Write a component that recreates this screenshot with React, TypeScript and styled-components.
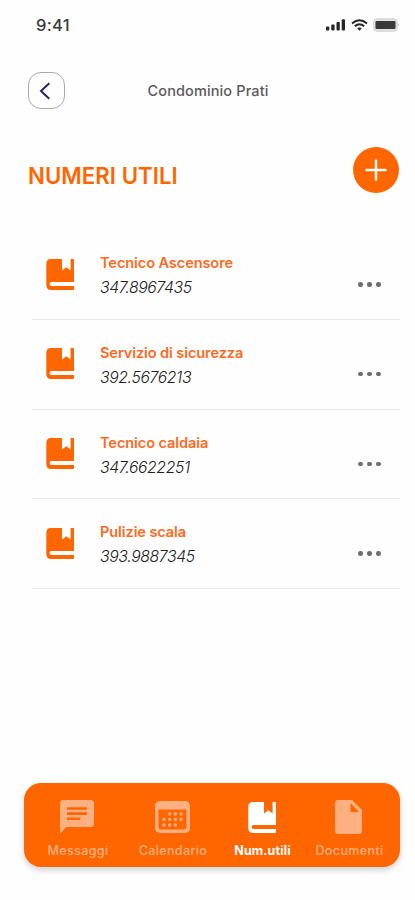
import React from "react";
import styled, { createGlobalStyle } from "styled-components";

const ORANGE = "#ff6600";
const PEACH = "#ffb080";

const GlobalStyle = createGlobalStyle`
  * { box-sizing: border-box; }
  body { margin: 0; background: #fefefe; }
  button { border: 0; padding: 0; background: none; font: inherit; color: inherit; }
  svg { display: block; flex: none; }
`;

const Screen = styled.div`
  display: flex;
  flex-direction: column;
  width: 415px;
  height: 900px;
  overflow: hidden;
  background: #fefefe;
  font-family: Inter, sans-serif;
`;

const StatusBar = styled.header`
  display: flex;
  align-items: center;
  justify-content: space-between;
  height: 50px;
  padding: 0 15px 0 36px;
`;

const Clock = styled.span`
  font-size: 16.5px;
  font-weight: 500;
  letter-spacing: 0.3px;
  color: #3a3a3a;
`;

const StatusIcons = styled.div`
  display: flex;
  align-items: center;
  gap: 5px;
`;

const TopBar = styled.div`
  display: grid;
  grid-template-columns: 37px 1fr 37px;
  align-items: center;
  width: 360px;
  height: 37px;
  margin: 22px 0 0 28px;
`;

const BackButton = styled.button`
  display: grid;
  place-items: center;
  width: 37px;
  height: 37px;
  padding-right: 3px;
  border: 1px solid #aaa;
  border-radius: 13px;
`;

const PlaceName = styled.span`
  text-align: center;
  font-size: 14.5px;
  font-weight: 500;
  letter-spacing: 0.12px;
  color: #5a5a5a;
`;

const Heading = styled.div`
  display: flex;
  align-items: center;
  justify-content: space-between;
  height: 46px;
  margin-top: 38px;
  padding: 0 16px 0 28px;
`;

const Title = styled.h1`
  margin: 11px 0 0;
  font-size: 22.2px;
  line-height: 28px;
  font-weight: 600;
  letter-spacing: 0.05px;
  color: ${ORANGE};
`;

const AddButton = styled.button`
  display: grid;
  place-items: center;
  width: 46px;
  height: 46px;
  border-radius: 50%;
  background: ${ORANGE};
`;

const ContactList = styled.ul`
  list-style: none;
  margin: 37px 15px 0 32px;
  padding: 0;
`;

const ContactRow = styled.li`
  display: grid;
  grid-template-columns: 68px 1fr 42px;
  height: 89.75px;
  padding-top: 20px;
  border-bottom: 1.5px solid #e9e9e9;
`;

const BookCell = styled.div`
  padding: 8.5px 0 0 14px;
  color: ${ORANGE};
`;

const ContactName = styled.div`
  font-size: 14.6px;
  line-height: 26px;
  font-weight: 600;
  letter-spacing: -0.12px;
  color: #ff6a1f;
`;

const Phone = styled.div`
  font-size: 15.8px;
  line-height: 24px;
  font-style: italic;
  font-weight: 300;
  letter-spacing: -0.4px;
  color: #222;
`;

const MoreButton = styled.button`
  display: flex;
  align-self: start;
  gap: 4.4px;
  margin-top: 32px;
`;

const Dot = styled.span`
  width: 4.6px;
  height: 4.6px;
  border-radius: 50%;
  background: #6c6c6c;
`;

const BottomNav = styled.nav`
  display: grid;
  grid-template-columns: 98px 92px 87px 87px;
  width: 376px;
  height: 84px;
  margin: auto 0 33px 24px;
  padding: 0 7px 0 5px;
  border-radius: 17px;
  background: ${ORANGE};
  box-shadow: 0 3px 6px rgba(0, 0, 0, 0.18);
`;

const NavItem = styled.a<{ $active?: boolean }>`
  display: flex;
  flex-direction: column;
  align-items: center;
  padding-top: 16.5px;
  color: ${(p) => (p.$active ? "#fff" : PEACH)};
`;

const NavIcon = styled.span`
  display: grid;
  place-items: center;
  height: 35px;
  margin-right: 1.5px;
`;

const NavLabel = styled.span<{ $active?: boolean }>`
  margin-top: 7px;
  font-size: 12.5px;
  line-height: 18px;
  white-space: nowrap;
  font-weight: ${(p) => (p.$active ? 700 : 500)};
  letter-spacing: ${(p) => (p.$active ? 0.12 : 0.38)}px;
`;

const BookIcon = () => (
  <svg width="28" height="31" viewBox="0 0 28 31" fill="currentColor">
    <path d="M5 0H16V11.6L20.3 8.2 24.6 11.6V0H27.2Q28 0 28 .8V23.1H5.5Q3.6 23.1 3.6 25T5.5 26.9H28V30.2Q28 31 27.2 31H5.2Q.3 31 .3 26V4.7Q.3 0 5 0Z" />
  </svg>
);

const MessageIcon = () => (
  <svg width="34" height="34" viewBox="0 0 34 34">
    <path d="M3.5 0H30.5Q34 0 34 3.5V23.5Q34 27 30.5 27H6.5L0 33.7V3.5Q0 0 3.5 0Z" fill="currentColor" />
    <path d="M7 8.5H27M7 13.6H27M7 18.8H20.5" stroke={ORANGE} strokeWidth="2.6" />
  </svg>
);

const CalendarIcon = () => (
  <svg width="35" height="32" viewBox="0 0 35 32">
    <rect width="35" height="32" rx="5" fill="currentColor" />
    <path d="M3.5 8.5H31.5V26Q31.5 28.5 29 28.5H6Q3.5 28.5 3.5 26Z" fill={ORANGE} />
    <path
      d="M14.7 13h.01M20.4 13h.01M26.1 13h.01M9 18.5h.01M14.7 18.5h.01M20.4 18.5h.01M26.1 18.5h.01M9 24h.01M14.7 24h.01M20.4 24h.01"
      stroke="currentColor"
      strokeWidth="3.4"
      strokeLinecap="round"
    />
  </svg>
);

const DocumentIcon = () => (
  <svg width="27" height="34" viewBox="0 0 27 34">
    <path fillRule="evenodd" d="M3.5 0H17L27 10V30.5Q27 34 23.5 34H3.5Q0 34 0 30.5V3.5Q0 0 3.5 0ZM15.5 3V12H24Z" fill="currentColor" />
  </svg>
);

const SignalIcon = () => (
  <svg width="20" height="12" viewBox="0 0 20 12" fill="#252525">
    <rect x="0" y="7.5" width="3.3" height="4" rx="1" />
    <rect x="5.3" y="5.5" width="3.3" height="6" rx="1" />
    <rect x="10.5" y="3" width="3.3" height="8.5" rx="1" />
    <rect x="15.7" y="0.3" width="3.3" height="11.2" rx="1" />
  </svg>
);

const WifiIcon = () => (
  <svg width="17" height="12" viewBox="0 0 17 12" fill="none" stroke="#252525" strokeWidth="2">
    <path d="M1 4.4Q8.5-2 16 4.4M3.8 7.2Q8.5 3.2 13.2 7.2" />
    <path d="M6.2 9.3Q8.5 7.5 10.8 9.3L8.5 11.8Z" fill="#252525" stroke="none" />
  </svg>
);

const BatteryIcon = () => (
  <svg width="27" height="14" viewBox="0 0 27 14">
    <rect x=".7" y=".7" width="23.6" height="12.6" rx="3.5" fill="#e2e2e2" stroke="#d4d4d4" />
    <rect x="2.5" y="3" width="20" height="8" rx="1.2" fill="#3a3a3a" />
    <path d="M25.3 5Q26.6 7 25.3 9Z" fill="#999" />
  </svg>
);

const contacts = [
  { name: "Tecnico Ascensore", phone: "347.8967435" },
  { name: "Servizio di sicurezza", phone: "392.5676213" },
  { name: "Tecnico caldaia", phone: "347.6622251" },
  { name: "Pulizie scala", phone: "393.9887345" },
];

const tabs = [
  { label: "Messaggi", Icon: MessageIcon },
  { label: "Calendario", Icon: CalendarIcon },
  { label: "Num.utili", Icon: BookIcon, active: true },
  { label: "Documenti", Icon: DocumentIcon },
];

export default function App() {
  return (
    <>
      <GlobalStyle />
      <Screen>
        <StatusBar>
          <Clock>9:41</Clock>
          <StatusIcons>
            <SignalIcon />
            <WifiIcon />
            <BatteryIcon />
          </StatusIcons>
        </StatusBar>
        <TopBar>
          <BackButton aria-label="Indietro">
            <svg width="12" height="18" viewBox="0 0 12 18" fill="none" stroke="#29245c" strokeWidth="2">
              <path d="M10.3 1.3 2 9l8.3 7.7" />
            </svg>
          </BackButton>
          <PlaceName>Condominio Prati</PlaceName>
        </TopBar>
        <Heading>
          <Title>NUMERI UTILI</Title>
          <AddButton aria-label="Aggiungi">
            <svg width="22" height="22" viewBox="0 0 22 22" stroke="#fff" strokeWidth="2.4" strokeLinecap="round">
              <path d="M11 1.5V20.5M1.5 11H20.5" />
            </svg>
          </AddButton>
        </Heading>
        <ContactList>
          {contacts.map((c) => (
            <ContactRow key={c.name}>
              <BookCell>
                <BookIcon />
              </BookCell>
              <div>
                <ContactName>{c.name}</ContactName>
                <Phone>{c.phone}</Phone>
              </div>
              <MoreButton aria-label="Altro">
                <Dot />
                <Dot />
                <Dot />
              </MoreButton>
            </ContactRow>
          ))}
        </ContactList>
        <BottomNav>
          {tabs.map(({ label, Icon, active }) => (
            <NavItem key={label} $active={active}>
              <NavIcon>
                <Icon />
              </NavIcon>
              <NavLabel $active={active}>{label}</NavLabel>
            </NavItem>
          ))}
        </BottomNav>
      </Screen>
    </>
  );
}
